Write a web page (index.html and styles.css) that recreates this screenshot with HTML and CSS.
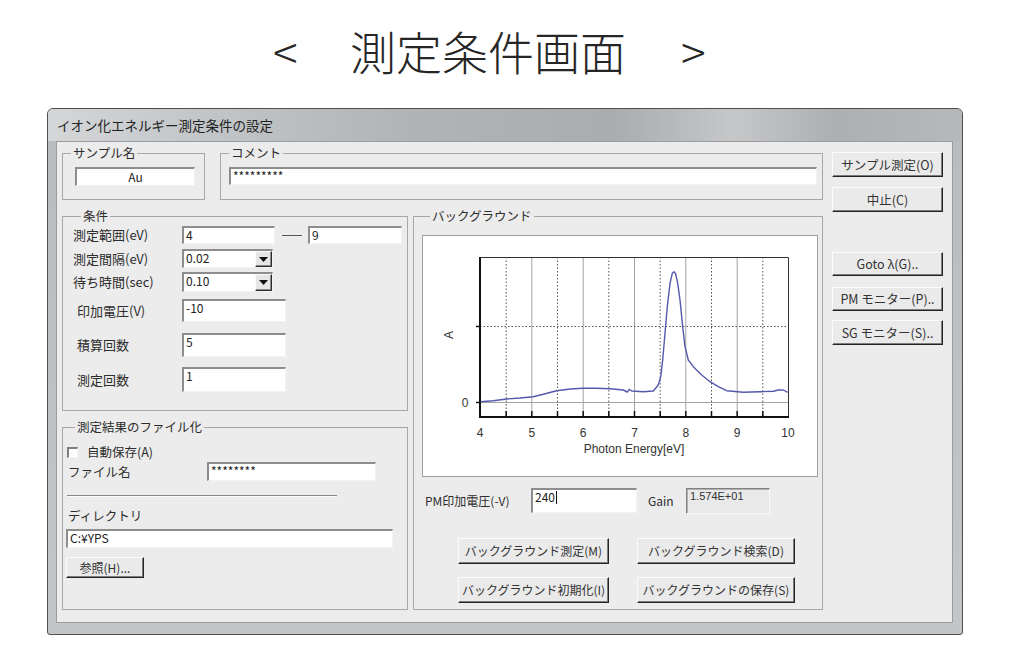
FILE: index.html
```html
<!DOCTYPE html>
<html lang="ja">
<head>
<meta charset="utf-8">
<title>測定条件画面</title>
<link rel="stylesheet" href="styles.css">
</head>
<body>
<h1 class="caption"><span class="caption-lt">&lt;</span><span class="caption-main">測定条件画面</span><span class="caption-gt">&gt;</span></h1>

<div class="window">
  <div class="titlebar">イオン化エネルギー測定条件の設定</div>
  <div class="client">
    <div class="main">
      <div class="top-row">
        <fieldset class="group group-sample">
          <legend>サンプル名</legend>
          <div class="field field-sample">Au</div>
        </fieldset>
        <fieldset class="group group-comment">
          <legend>コメント</legend>
          <div class="field field-comment">*********</div>
        </fieldset>
      </div>

      <div class="body-row">
        <div class="left-col">
          <fieldset class="group group-cond">
            <legend>条件</legend>
            <div class="cond-row r1">
              <span class="cond-label">測定範囲(eV)</span>
              <div class="field range-from">4</div>
              <span class="dash"></span>
              <div class="field range-to">9</div>
            </div>
            <div class="cond-row r2">
              <span class="cond-label">測定間隔(eV)</span>
              <div class="combo">
                <div class="combo-text">0.02</div>
                <div class="combo-btn"><svg width="9" height="5" viewBox="0 0 9 5"><polygon points="0,0 9,0 4.5,5" fill="#111"/></svg></div>
              </div>
            </div>
            <div class="cond-row r3">
              <span class="cond-label">待ち時間(sec)</span>
              <div class="combo">
                <div class="combo-text">0.10</div>
                <div class="combo-btn"><svg width="9" height="5" viewBox="0 0 9 5"><polygon points="0,0 9,0 4.5,5" fill="#111"/></svg></div>
              </div>
            </div>
            <div class="cond-row r4">
              <span class="cond-label indent">印加電圧(V)</span>
              <div class="field wide">-10</div>
            </div>
            <div class="cond-row r5">
              <span class="cond-label indent">積算回数</span>
              <div class="field wide">5</div>
            </div>
            <div class="cond-row r6">
              <span class="cond-label indent">測定回数</span>
              <div class="field wide">1</div>
            </div>
          </fieldset>

          <fieldset class="group group-file">
            <legend>測定結果のファイル化</legend>
            <div class="auto-row">
              <span class="checkbox"></span>
              <span class="auto-label">自動保存(A)</span>
            </div>
            <div class="file-row">
              <span class="file-label">ファイル名</span>
              <div class="field field-name">********</div>
            </div>
            <div class="separator"></div>
            <div class="dir-label">ディレクトリ</div>
            <div class="field field-dir">C:¥YPS</div>
            <div class="btn btn-browse">参照(H)...</div>
          </fieldset>
        </div>

        <fieldset class="group group-bg">
          <legend>バックグラウンド</legend>
          <div class="plot">
            <svg class="chart" width="394" height="240" viewBox="0 0 394 240">
              <!-- integer grid lines -->
              <g stroke="#a3a3a3" stroke-width="1">
                <line x1="108.8" y1="21" x2="108.8" y2="180"/>
                <line x1="160.2" y1="21" x2="160.2" y2="180"/>
                <line x1="211.5" y1="21" x2="211.5" y2="180"/>
                <line x1="262.8" y1="21" x2="262.8" y2="180"/>
                <line x1="314.2" y1="21" x2="314.2" y2="180"/>
                <line x1="57" y1="166.5" x2="365" y2="166.5"/>
              </g>
              <!-- half-unit grid lines -->
              <g stroke="#555" stroke-width="1" stroke-dasharray="1.5 2">
                <line x1="83.2" y1="21" x2="83.2" y2="180"/>
                <line x1="134.5" y1="21" x2="134.5" y2="180"/>
                <line x1="185.8" y1="21" x2="185.8" y2="180"/>
                <line x1="237.2" y1="21" x2="237.2" y2="180"/>
                <line x1="288.5" y1="21" x2="288.5" y2="180"/>
                <line x1="339.8" y1="21" x2="339.8" y2="180"/>
                <line x1="57" y1="90.5" x2="365" y2="90.5"/>
              </g>
              <!-- frame and axes -->
              <path d="M57 21.5 H365.5 V180" fill="none" stroke="#333" stroke-width="1"/>
              <path d="M57 21 V181 H366" fill="none" stroke="#111" stroke-width="2"/>
              <g stroke="#111" stroke-width="1.5">
                <line x1="83.2" y1="180" x2="83.2" y2="175"/>
                <line x1="108.8" y1="180" x2="108.8" y2="175"/>
                <line x1="134.5" y1="180" x2="134.5" y2="175"/>
                <line x1="160.2" y1="180" x2="160.2" y2="175"/>
                <line x1="185.8" y1="180" x2="185.8" y2="175"/>
                <line x1="211.5" y1="180" x2="211.5" y2="175"/>
                <line x1="237.2" y1="180" x2="237.2" y2="175"/>
                <line x1="262.8" y1="180" x2="262.8" y2="175"/>
                <line x1="288.5" y1="180" x2="288.5" y2="175"/>
                <line x1="314.2" y1="180" x2="314.2" y2="175"/>
                <line x1="339.8" y1="180" x2="339.8" y2="175"/>
                <line x1="53" y1="90.5" x2="57" y2="90.5"/>
                <line x1="53" y1="166.5" x2="57" y2="166.5"/>
              </g>
              <!-- spectrum -->
              <polyline fill="none" stroke="#5558ad" stroke-width="1.4" stroke-linejoin="round"
                points="57.7,165.7 70.3,164.7 83.7,163 97,162 110.3,160.7 120.3,158.3 133.7,154.7 147,153 160.3,152.3 173.7,152.3 187,152.7 200.3,154 204.3,156 206.3,153.3 208.7,155 220.3,155.7 230.3,155 235.3,149 237.7,140.7 239.7,124 242,97.3 244.3,70.7 247,47.3 249.3,37.3 251,35.7 252.7,38 254.7,47.3 257,64 259.7,90.7 262,110.7 265.3,124 270.3,130.7 278.7,139 287,145.7 295.3,150.7 303.7,154.7 320.3,156.3 337,155.7 350.3,155.3 355.3,154 360.3,154 364.7,156.3"/>
              <!-- labels -->
              <g class="tick-labels" text-anchor="middle">
                <text x="57" y="201">4</text>
                <text x="108.8" y="201">5</text>
                <text x="160.2" y="201">6</text>
                <text x="211.5" y="201">7</text>
                <text x="262.8" y="201">8</text>
                <text x="314.2" y="201">9</text>
                <text x="365" y="201">10</text>
                <text x="211" y="217">Photon Energy[eV]</text>
                <text x="42" y="170.5">0</text>
                <text x="0" y="0" transform="translate(30 99) rotate(-90)">A</text>
              </g>
            </svg>
          </div>
          <div class="pm-row">
            <span class="pm-label">PM印加電圧(-V)</span>
            <div class="field field-pm">240<span class="caret"></span></div>
            <span class="gain-label">Gain</span>
            <div class="gain-box">1.574E+01</div>
          </div>
          <div class="bg-btns first">
            <div class="btn btn-bg-a">バックグラウンド測定(M)</div>
            <div class="btn btn-bg-b">バックグラウンド検索(D)</div>
          </div>
          <div class="bg-btns second">
            <div class="btn btn-bg-a">バックグラウンド初期化(I)</div>
            <div class="btn btn-bg-b">バックグラウンドの保存(S)</div>
          </div>
        </fieldset>
      </div>
    </div>

    <div class="side">
      <div class="btn side-btn b1">サンプル測定(O)</div>
      <div class="btn side-btn b2">中止(C)</div>
      <div class="btn side-btn b3">Goto λ(G)..</div>
      <div class="btn side-btn b4">PM モニター(P)..</div>
      <div class="btn side-btn b5">SG モニター(S)..</div>
    </div>
  </div>
</div>
</body>
</html>
```

FILE: styles.css
```css
* {
  box-sizing: border-box;
}

body {
  margin: 0;
  width: 1024px;
  height: 659px;
  overflow: hidden;
  background: #fff;
  font-family: "Noto Sans CJK JP", "Noto Sans", sans-serif;
  color: #2c2c2c;
}

/* page heading */
.caption {
  margin: 0;
  height: 108px;
  padding: 23px 0 0 273px;
  display: flex;
  align-items: flex-start;
  font-size: 46px;
  line-height: 54px;
  font-weight: 300;
  color: #262626;
}

.caption-lt {
  width: 77px;
}

.caption-gt {
  margin-left: 55px;
}

/* dialog window */
.window {
  margin-left: 47px;
  width: 916px;
  height: 527px;
  border: 1px solid #4e4e4e;
  border-radius: 6px 6px 3px 3px;
  background: linear-gradient(to bottom, #b9bcbf, #c3c5c7);
  padding: 0 9px 11px 8px;
  display: flex;
  flex-direction: column;
  overflow: hidden;
}

.titlebar {
  margin: 0 -9px 0 -8px;
  height: 32px;
  padding-left: 9px;
  line-height: 32px;
  font-size: 13.5px;
  color: #222;
  background: linear-gradient(to right, #d4d6d8 0%, #c2c5c8 18%, #b0b4b7 40%, #a9adb0 62%, #c5c7c9 75%, #adb0b3 86%, #b6b9bc 100%);
}

.client {
  flex: 1;
  display: flex;
  background: #ececec;
  border: 1px solid #9c9c9c;
  padding: 4px 0 0 5px;
}

.main {
  width: 761px;
  display: flex;
  flex-direction: column;
}

.side {
  width: 111px;
  margin-left: 9px;
  margin-top: 6px;
  display: flex;
  flex-direction: column;
}

/* group boxes */
.group {
  margin: 0;
  padding: 0;
  min-width: 0;
  border: 1px solid #a7a7a7;
}

.group legend {
  margin-left: 8px;
  padding: 0 2px;
  height: 14px;
  font-size: 12.5px;
  line-height: 14px;
  color: #2c2c2c;
}

.top-row {
  display: flex;
  gap: 15px;
}

.group-sample {
  width: 143px;
  height: 54px;
}

.group-comment {
  width: 603px;
  height: 54px;
}

.body-row {
  display: flex;
  gap: 5px;
  margin-top: 9px;
}

.left-col {
  width: 346px;
  display: flex;
  flex-direction: column;
}

.group-cond {
  height: 202px;
  padding-left: 10px;
}

.group-file {
  height: 190px;
  margin-top: 9px;
  padding-left: 4px;
}

.group-bg {
  width: 410px;
  height: 401px;
  padding-left: 8px;
}

/* text fields */
.field {
  background: #fff;
  border-style: solid;
  border-width: 2px 1px 1px 2px;
  border-color: #8d8d8d #f3f3f3 #f3f3f3 #8d8d8d;
  padding: 0 2px;
  font-size: 12px;
  line-height: 14px;
  color: #222;
  white-space: nowrap;
  overflow: hidden;
}

.field-sample {
  margin: 7px 0 0 12px;
  width: 120px;
  height: 19px;
  text-align: center;
  line-height: 16px;
}

.field-comment {
  margin: 7px 0 0 8px;
  width: 588px;
  height: 18px;
}

/* condition rows */
.cond-row {
  display: flex;
  align-items: center;
}

.cond-label {
  width: 109px;
  font-size: 13px;
  line-height: 14px;
  white-space: nowrap;
}

.cond-label.indent {
  padding-left: 4px;
}

.r1 { margin-top: 3px; height: 18px; }
.r2 { margin-top: 5px; height: 19px; }
.r3 { margin-top: 4px; height: 20px; }
.r4 { margin-top: 7px; height: 23px; }
.r5 { margin-top: 11px; height: 24px; }
.r6 { margin-top: 10px; height: 25px; }

.cond-row .field {
  height: 100%;
}

.range-from {
  width: 93px;
}

.range-to {
  width: 94px;
}

.dash {
  width: 20px;
  height: 1px;
  margin: 0 6px 0 7px;
  background: #555;
}

.wide {
  width: 104px;
}

.combo {
  width: 91px;
  height: 100%;
  display: flex;
  background: #fff;
  border-style: solid;
  border-width: 2px 1px 1px 2px;
  border-color: #8d8d8d #f3f3f3 #f3f3f3 #8d8d8d;
}

.combo-text {
  flex: 1;
  padding: 0 2px;
  font-size: 12px;
  line-height: 14px;
  color: #222;
}

.combo-btn {
  width: 17px;
  display: flex;
  align-items: center;
  justify-content: center;
  background: #e6e6e6;
  border: 1px solid;
  border-color: #fafafa #2e2e2e #2e2e2e #fafafa;
  box-shadow: inset -1px -1px 0 #8a8a8a;
}

/* file output group */
.auto-row {
  display: flex;
  align-items: center;
  margin-top: 12px;
  height: 12px;
}

.checkbox {
  width: 11px;
  height: 11px;
  background: #fff;
  border-style: solid;
  border-width: 2px 1px 1px 2px;
  border-color: #7e7e7e #f3f3f3 #f3f3f3 #7e7e7e;
}

.auto-label {
  margin-left: 9px;
  font-size: 12.5px;
  line-height: 14px;
}

.file-row {
  display: flex;
  align-items: center;
  margin-top: 4px;
  height: 19px;
}

.file-label {
  width: 140px;
  padding-left: 1px;
  font-size: 12.5px;
  line-height: 14px;
}

.field-name {
  width: 169px;
  height: 19px;
}

.separator {
  margin-top: 14px;
  width: 270px;
  border-top: 1px solid #858585;
  border-bottom: 1px solid #fbfbfb;
}

.dir-label {
  margin-top: 12px;
  padding-left: 1px;
  font-size: 12.5px;
  line-height: 14px;
}

.field-dir {
  margin: 6px 0 0 -1px;
  width: 327px;
  height: 19px;
}

/* buttons */
.btn {
  display: flex;
  align-items: center;
  justify-content: center;
  background: #eaeaea;
  border: 1px solid;
  border-color: #fbfbfb #242424 #242424 #fbfbfb;
  box-shadow: inset -1px -1px 0 #7c7c7c;
  font-size: 12px;
  line-height: 14px;
  color: #333;
  white-space: nowrap;
}

.btn-browse {
  margin: 9px 0 0 -1px;
  width: 78px;
  height: 21px;
}

.side-btn {
  width: 111px;
  font-size: 12.5px;
}

.b1 { height: 25px; }
.b2 { height: 25px; margin-top: 10px; }
.b3 { height: 24px; margin-top: 40px; }
.b4 { height: 24px; margin-top: 11px; }
.b5 { height: 25px; margin-top: 9px; }

/* background group */
.plot {
  margin-top: 12px;
  width: 396px;
  height: 242px;
  background: #fff;
  border: 1px solid #9d9d9d;
}

.chart {
  display: block;
}

.tick-labels {
  font-family: "Liberation Sans", Arial, sans-serif;
  font-size: 12px;
  fill: #333;
}

.pm-row {
  display: flex;
  align-items: center;
  margin-top: 11px;
  height: 26px;
}

.pm-label {
  margin-left: 3px;
  width: 106px;
  font-size: 12px;
  line-height: 14px;
  white-space: nowrap;
}

.field-pm {
  width: 106px;
  height: 25px;
  align-self: flex-start;
  display: flex;
  align-items: flex-start;
}

.caret {
  width: 1px;
  height: 13px;
  margin: 1px 0 0 1px;
  background: #111;
}

.gain-label {
  margin-left: 11px;
  width: 38px;
  font-size: 12px;
  line-height: 14px;
}

.gain-box {
  width: 84px;
  height: 26px;
  padding: 1px 3px 0;
  background: #e9e9e9;
  border-style: solid;
  border-width: 1px;
  border-color: #808080 #fafafa #fafafa #808080;
  box-shadow: inset 1px 1px 0 #b0b0b0;
  font-family: "Liberation Sans", Arial, sans-serif;
  font-size: 11px;
  line-height: 13px;
  color: #333;
}

.bg-btns {
  display: flex;
  gap: 28px;
  margin-left: 36px;
}

.bg-btns.first {
  margin-top: 24px;
}

.bg-btns.second {
  margin-top: 13px;
}

.bg-btns .btn {
  height: 26px;
  font-size: 12px;
}

.btn-bg-a {
  width: 151px;
}

.btn-bg-b {
  width: 158px;
}
```
